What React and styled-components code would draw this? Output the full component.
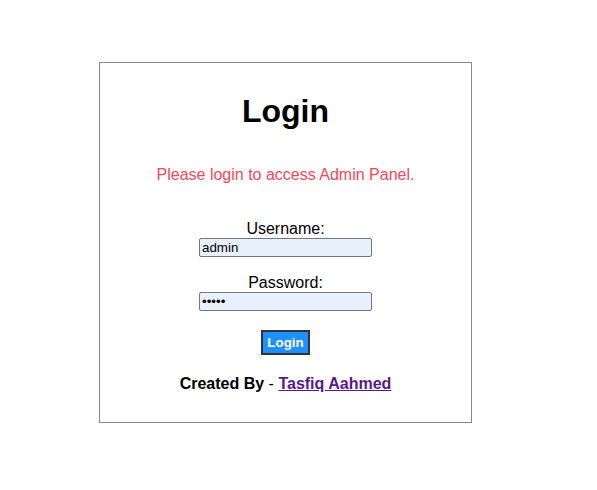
import React from 'react';
import styled, { createGlobalStyle } from 'styled-components';

const GlobalStyle = createGlobalStyle`
  body {
    margin: 0;
    background: #fff;
    font-family: "Liberation Sans", Arial, sans-serif;
  }
`;

const Page = styled.div`
  padding: 62px 0 0 99px;
`;

const Card = styled.div`
  box-sizing: border-box;
  width: 373px;
  height: 361px;
  border: 1px solid #888;
  display: flex;
  flex-direction: column;
  align-items: center;
  padding-top: 30px;
`;

const Title = styled.h1`
  margin: 0;
  font-size: 32px;
  line-height: 37px;
  font-weight: bold;
  color: #000;
`;

const Notice = styled.p`
  margin: 36px 0 0;
  font-size: 16px;
  line-height: 18px;
  color: #f5475a;
`;

const Form = styled.form`
  display: flex;
  flex-direction: column;
  align-items: center;
  margin-top: 36px;
`;

const Label = styled.label`
  font-size: 16px;
  line-height: 18px;
  color: #000;
  margin-top: ${(p) => p.$gap || 0}px;
`;

const Input = styled.input`
  box-sizing: border-box;
  width: 173px;
  height: 19px;
  margin: 0;
  padding: 0 2px;
  border: 1px solid #767676;
  border-radius: 2px;
  background: #e8f0fe;
  font-family: "Liberation Sans", Arial, sans-serif;
  font-size: 13.33px;
  color: #000;
  outline: none;
`;

const Button = styled.button`
  margin-top: 19px;
  height: 25px;
  padding: 0 4px;
  background: #1e90ff;
  border: 2px solid #333;
  color: #fff;
  font-family: "Liberation Sans", Arial, sans-serif;
  font-size: 13.33px;
  font-weight: bold;
`;

const Credit = styled.p`
  margin: 20px 0 0;
  font-size: 16px;
  line-height: 18px;
  font-weight: bold;
  color: #000;
`;

const Dash = styled.span`
  font-weight: normal;
`;

const Author = styled.a`
  color: #551a8b;
  font-weight: bold;
  text-decoration: underline;
`;

export default function App() {
  return (
    <>
      <GlobalStyle />
      <Page>
        <Card>
          <Title>Login</Title>
          <Notice>Please login to access Admin Panel.</Notice>
          <Form onSubmit={(e) => e.preventDefault()}>
            <Label htmlFor="user">Username:</Label>
            <Input id="user" type="text" defaultValue="admin" />
            <Label htmlFor="pass" $gap={17}>Password:</Label>
            <Input id="pass" type="password" defaultValue="admin" />
            <Button type="submit">Login</Button>
          </Form>
          <Credit>
            Created By <Dash>-</Dash> <Author href="#">Tasfiq Aahmed</Author>
          </Credit>
        </Card>
      </Page>
    </>
  );
}
